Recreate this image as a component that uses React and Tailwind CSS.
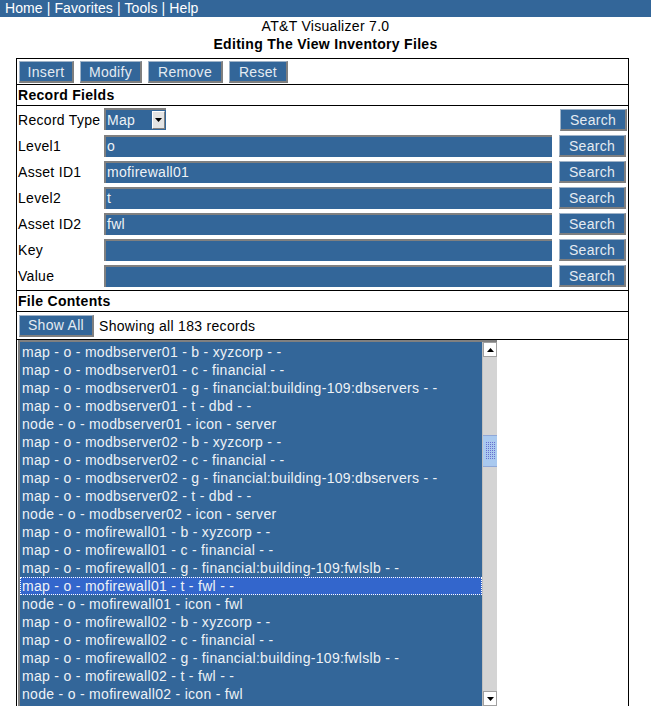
import React from "react"

const records = [
  "map - o - modbserver01 - b - xyzcorp - -",
  "map - o - modbserver01 - c - financial - -",
  "map - o - modbserver01 - g - financial:building-109:dbservers - -",
  "map - o - modbserver01 - t - dbd - -",
  "node - o - modbserver01 - icon - server",
  "map - o - modbserver02 - b - xyzcorp - -",
  "map - o - modbserver02 - c - financial - -",
  "map - o - modbserver02 - g - financial:building-109:dbservers - -",
  "map - o - modbserver02 - t - dbd - -",
  "node - o - modbserver02 - icon - server",
  "map - o - mofirewall01 - b - xyzcorp - -",
  "map - o - mofirewall01 - c - financial - -",
  "map - o - mofirewall01 - g - financial:building-109:fwlslb - -",
  "map - o - mofirewall01 - t - fwl - -",
  "node - o - mofirewall01 - icon - fwl",
  "map - o - mofirewall02 - b - xyzcorp - -",
  "map - o - mofirewall02 - c - financial - -",
  "map - o - mofirewall02 - g - financial:building-109:fwlslb - -",
  "map - o - mofirewall02 - t - fwl - -",
  "node - o - mofirewall02 - icon - fwl",
]

const fields = [
  { label: "Level1", value: "o" },
  { label: "Asset ID1", value: "mofirewall01" },
  { label: "Level2", value: "t" },
  { label: "Asset ID2", value: "fwl" },
  { label: "Key", value: "" },
  { label: "Value", value: "" },
]

const Btn = ({ children, className = "" }) => (
  <button
    className={
      "h-[22px] bg-[#336699] text-[#e4ebf2] leading-[18px] border-t border-l border-t-[#9fb3c8] border-l-[#9fb3c8] border-b-2 border-r-2 border-b-[#7f7f7f] border-r-[#7f7f7f] " +
      className
    }
  >
    {children}
  </button>
)

const SearchBtn = () => <Btn className="w-[67px]">Search</Btn>

const TextBox = ({ value }) => (
  <div className="h-[22px] w-[448px] bg-[#336699] border-t-2 border-l-2 border-[#808080] pl-[1px] text-[#eef2f6] leading-[19px]">
    {value}
  </div>
)

const ArrowUp = () => (
  <svg width="7" height="4" viewBox="0 0 7 4">
    <path d="M0 4 L3.5 0 L7 4 Z" fill="#000" />
  </svg>
)

const ArrowDown = () => (
  <svg width="7" height="4" viewBox="0 0 7 4">
    <path d="M0 0 L3.5 4 L7 0 Z" fill="#000" />
  </svg>
)

const ThumbDots = () => (
  <svg width="13" height="30" viewBox="0 0 13 30">
    {[0, 1, 2, 3, 4, 5, 6, 7, 8].map((r) =>
      [0, 1, 2, 3, 4].map((c) => (
        <rect key={r + "-" + c} x={2 + c * 2} y={6 + r * 2} width="1" height="1" fill="#6a6fd0" />
      ))
    )}
  </svg>
)

export default function App() {
  return (
    <div className="h-[706px] w-[651px] overflow-hidden bg-white text-black font-['Liberation_Sans',Arial,sans-serif] text-[14px] leading-[18px] tracking-[0.3px]">
      {/* Nav */}
      <div className="h-[17px] bg-[#336699] pl-[5px] text-white leading-[16px] tracking-[0.1px]">
        Home | Favorites | Tools | Help
      </div>

      <div className="text-center">AT&amp;T Visualizer 7.0</div>
      <div className="text-center font-bold">Editing The View Inventory Files</div>

      <div className="mx-[16px] mt-[5px] border border-black w-[613px]">
        {/* Actions */}
        <div className="h-[26px] border-b border-black flex items-center gap-[6px] pl-[2px] pt-[1px]">
          <Btn className="w-[55px]">Insert</Btn>
          <Btn className="w-[62px]">Modify</Btn>
          <Btn className="w-[75px]">Remove</Btn>
          <Btn className="w-[59px]">Reset</Btn>
        </div>

        <div className="h-[21px] border-b border-black pl-[1px] font-bold leading-[20px]">Record Fields</div>

        {/* Fields */}
        <div className="border-b border-black pt-[1px] h-[185px]">
          <div className="h-[26px] flex items-center pl-[1px]">
            <div className="w-[86px]">Record Type</div>
            <div className="h-[22px] w-[62px] bg-[#336699] border-t-2 border-l-2 border-[#808080] flex items-center -mt-[2px]">
              <span className="pl-[1px] text-[#eef2f6] flex-1">Map</span>
              <div className="h-[18px] w-[13px] mr-[1px] bg-[#e4e4e4] border-t border-l border-white border-b border-r border-b-[#808080] border-r-[#808080] flex items-center justify-center">
                <ArrowDown />
              </div>
            </div>
            <div className="ml-auto mr-[1px]">
              <SearchBtn />
            </div>
          </div>
          {fields.map((f) => (
            <div key={f.label} className="h-[26px] flex items-center pl-[1px]">
              <div className="w-[86px]">{f.label}</div>
              <TextBox value={f.value} />
              <div className="ml-[7px]">
                <SearchBtn />
              </div>
            </div>
          ))}
        </div>

        <div className="h-[21px] border-b border-black pl-[1px] font-bold leading-[20px]">File Contents</div>

        <div className="h-[28px] border-b border-black flex items-center pl-[2px] gap-[5px]">
          <Btn className="w-[75px]">Show All</Btn>
          <span>Showing all 183 records</span>
        </div>

        {/* Records list */}
        <div className="ml-[1px] h-[368px] w-[479px] border-t-2 border-l-2 border-[#808080] bg-[#336699] flex">
          <div className="flex-1 overflow-hidden pt-[1px]">
            {records.map((r, i) =>
              i === 13 ? (
                <div
                  key={i}
                  className="h-[18px] bg-[#3366cc] border border-dotted border-white pl-[1px] leading-[16px] text-[#eef2f6] whitespace-nowrap"
                >
                  {r}
                </div>
              ) : (
                <div key={i} className="h-[18px] pl-[2px] text-[#eef2f6] whitespace-nowrap">
                  {r}
                </div>
              )
            )}
          </div>
          <div className="w-[15px] h-[364px] bg-[#d4d4d4] border-l border-[#c0c0c0] flex flex-col">
            <div className="h-[15px] bg-white border border-[#a0a0a0] flex items-center justify-center">
              <ArrowUp />
            </div>
            <div className="h-[78px]" />
            <div className="h-[32px] bg-[#a9c9ef] border-y border-[#8fa8d8] flex items-center justify-center">
              <ThumbDots />
            </div>
            <div className="flex-1" />
            <div className="h-[15px] bg-white border border-[#a0a0a0] flex items-center justify-center">
              <ArrowDown />
            </div>
          </div>
        </div>
      </div>
    </div>
  )
}
